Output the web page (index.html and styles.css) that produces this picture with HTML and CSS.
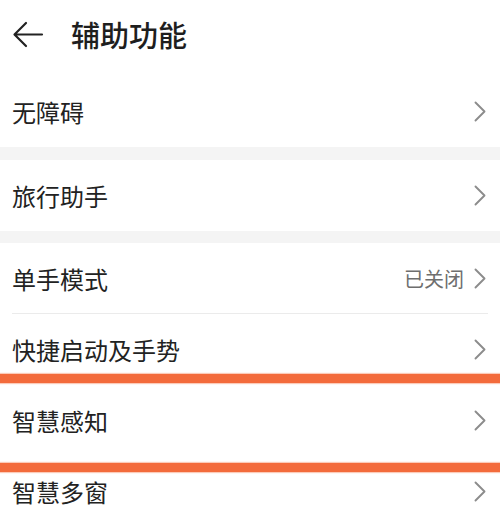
FILE: index.html
```html
<!DOCTYPE html>
<html lang="zh">
<head>
<meta charset="utf-8">
<link rel="stylesheet" href="styles.css">
</head>
<body>
<div class="page">
  <header class="header">
    <svg class="back" width="32" height="28" viewBox="0 0 32 28">
      <path d="M30 13.5H3M14 2L2.5 13.5L14 25" fill="none" stroke="#222" stroke-width="2.2" stroke-linecap="round" stroke-linejoin="round"/>
    </svg>
    <h1 class="title">辅助功能</h1>
  </header>

  <section class="group first">
    <div class="row"><span class="label">无障碍</span><svg class="chev" width="12" height="21" viewBox="0 0 12 21"><path d="M1.5 1.5L10.5 10.5L1.5 19.5"/></svg></div>
  </section>

  <section class="group">
    <div class="row"><span class="label">旅行助手</span><svg class="chev" width="12" height="21" viewBox="0 0 12 21"><path d="M1.5 1.5L10.5 10.5L1.5 19.5"/></svg></div>
  </section>

  <section class="group">
    <div class="row divided"><span class="label">单手模式</span><span class="value">已关闭</span><svg class="chev" width="12" height="21" viewBox="0 0 12 21"><path d="M1.5 1.5L10.5 10.5L1.5 19.5"/></svg></div>
    <div class="row"><span class="label">快捷启动及手势</span><svg class="chev" width="12" height="21" viewBox="0 0 12 21"><path d="M1.5 1.5L10.5 10.5L1.5 19.5"/></svg></div>
    <div class="row"><span class="label">智慧感知</span><svg class="chev" width="12" height="21" viewBox="0 0 12 21"><path d="M1.5 1.5L10.5 10.5L1.5 19.5"/></svg></div>
    <div class="row"><span class="label">智慧多窗</span><svg class="chev" width="12" height="21" viewBox="0 0 12 21"><path d="M1.5 1.5L10.5 10.5L1.5 19.5"/></svg></div>
  </section>

  <div class="mark mark-a"></div>
  <div class="mark mark-b"></div>
</div>
</body>
</html>
```

FILE: styles.css
```css
html, body {
  margin: 0;
  padding: 0;
  background: #f4f4f4;
}
body {
  font-family: "Noto Sans CJK SC", "Noto Sans", sans-serif;
  color: #222;
  width: 500px;
  height: 514px;
  overflow: hidden;
}
.page {
  position: relative;
  width: 500px;
  height: 514px;
  overflow: hidden;
  display: flex;
  flex-direction: column;
}
.header {
  background: #fff;
  height: 76px;
  flex: none;
  display: flex;
  align-items: center;
  padding-left: 12px;
  box-sizing: border-box;
}
.back {
  display: block;
  margin-top: -6px;
}
.title {
  margin: 0 0 0 27px;
  font-size: 29px;
  font-weight: 500;
  line-height: 1;
  margin-top: -8px;
  color: #1e1e1e;
}
.group {
  background: #fff;
  flex: none;
  margin-top: 13px;
}
.group.first {
  margin-top: 0;
}
.group + .group + .group {
  margin-top: 12px;
}
.row {
  height: 71px;
  display: flex;
  align-items: center;
  padding: 0 14px 0 12px;
  position: relative;
  box-sizing: border-box;
}
.row.divided::after {
  content: "";
  position: absolute;
  left: 12px;
  right: 12px;
  bottom: 0;
  height: 1.5px;
  background: #ebebeb;
}
.label {
  flex: 1;
  font-size: 24px;
  line-height: 1;
  color: #222;
}
.value {
  font-size: 20px;
  color: #6e6e6e;
  margin-right: 10px;
}
.chev {
  display: block;
  flex: none;
}
.chev path {
  fill: none;
  stroke: #8c8c8c;
  stroke-width: 1.9;
  stroke-linecap: round;
  stroke-linejoin: round;
}
.mark {
  position: absolute;
  left: 0;
  right: 0;
  height: 9px;
  background: #f36b3c;
  box-shadow: 0 0 1px 1px rgba(246, 140, 100, 0.45);
}
.mark-a {
  top: 374px;
}
.mark-b {
  top: 463px;
}
```
